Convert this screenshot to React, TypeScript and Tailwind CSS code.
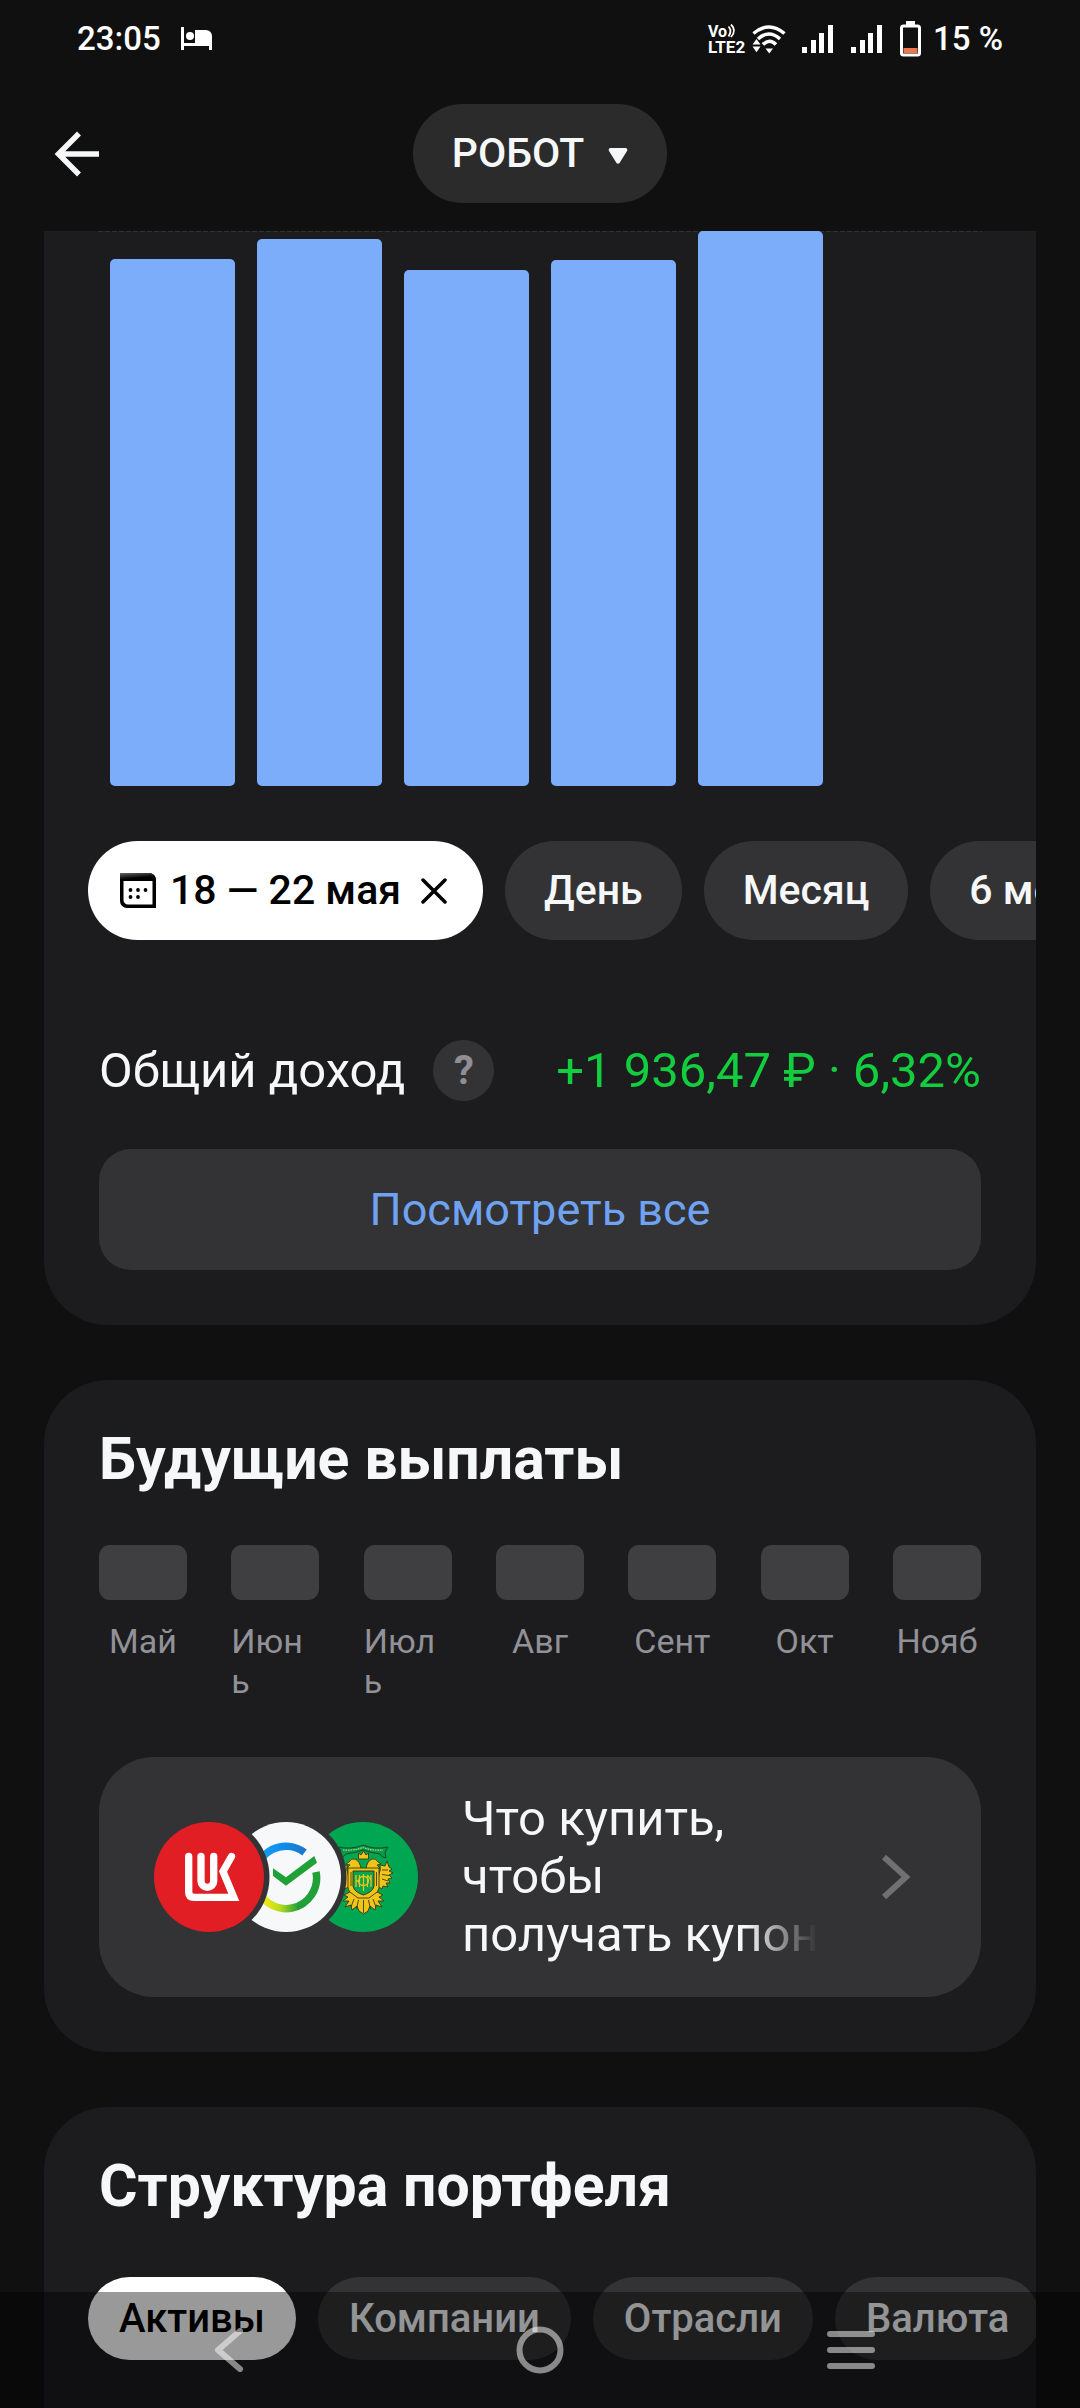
import { useState } from 'react';
import clsx from 'clsx';

const BARS = [527, 547, 516, 526, 555];
const CHART_HEIGHT = 555;

const PERIODS = ['День', 'Месяц', '6 месяцев'];
const MONTHS = ['Май', 'Июнь', 'Июль', 'Авг', 'Сент', 'Окт', 'Нояб'];
const SECTIONS = ['Активы', 'Компании', 'Отрасли', 'Валюта'];

function SignalIcon() {
  return (
    <svg width="31" height="28" viewBox="0 0 31 28" fill="#fff">
      <rect x="0" y="22" width="5" height="6" />
      <rect x="9" y="15" width="5" height="13" />
      <rect x="17" y="8" width="5" height="20" />
      <rect x="26" y="0" width="5" height="28" />
    </svg>
  );
}

function StatusBar() {
  return (
    <div className="flex h-[78px] shrink-0 items-center justify-between px-[77px] text-[33px] font-medium text-white">
      <div className="flex items-center gap-5">
        <span>23:05</span>
        <svg width="32" height="24" viewBox="0 0 32 24" fill="#fff">
          <rect x="0" y="0" width="3" height="23" />
          <rect x="0" y="16" width="31" height="3" />
          <rect x="28" y="10" width="3" height="13" />
          <circle cx="9" cy="9" r="4" />
          <path d="M14 3h11a6 6 0 0 1 6 6v8H14z" />
        </svg>
      </div>
      <div className="flex items-center">
        <svg width="40" height="32" viewBox="0 0 40 32" fill="#fff" className="mr-1 overflow-visible">
          <text x="0" y="14" fontSize="16" fontWeight="700" fontFamily="Roboto, sans-serif">Vo</text>
          <text x="0" y="30" fontSize="17" fontWeight="700" fontFamily="Roboto, sans-serif">LTE2</text>
          <path d="M20.500 3.500q4 4.500 0 10M23 1.500q6 6 0 12.500" fill="none" stroke="#fff" strokeWidth="1.800" />
        </svg>
        <svg width="34" height="30" viewBox="0 0 34 30" fill="none" stroke="#fff" strokeWidth="3.500">
          <path d="M1.500 9.500Q17 -3.500 32.500 9.500" />
          <path d="M6 15Q17 5 28 15" />
          <path d="M11 20.500Q17.500 14 24 20.500" />
          <path d="M13.500 24.500h7.500l-3.750 5z M0.500 22.500h8l-4 5.800z M0.500 20.500h8l-4 -5.500z" fill="#fff" stroke="none" />
        </svg>
        <div className="ml-4 mr-[18px] flex gap-[18px]">
          <SignalIcon />
          <SignalIcon />
        </div>
        <svg width="21" height="36" viewBox="0 0 21 36" className="mr-3">
          <rect x="6" y="0" width="9" height="5" fill="#fff" />
          <rect x="1.500" y="5" width="18" height="29" rx="2" fill="none" stroke="#fff" strokeWidth="3" />
          <rect x="3.500" y="27" width="14" height="5" fill="#ec7650" />
        </svg>
        <span>15 %</span>
      </div>
    </div>
  );
}

function Header() {
  return (
    <header className="grid h-[153px] shrink-0 grid-cols-[1fr_auto_1fr] items-center px-[54px] pb-0.5">
      <button aria-label="Назад" className="justify-self-start">
        <svg width="46" height="46" viewBox="0 0 46 46" fill="none" stroke="#f6f7f8" strokeWidth="5.500">
          <path d="M25 2.500 4.500 23 25 43.500M5 23h40" />
        </svg>
      </button>
      <button className="flex h-[99px] items-center gap-6 rounded-full bg-[#2b2b2b] px-[39px] text-[41px] font-medium text-[#f6f7f8]">
        РОБОТ
        <svg width="20" height="16" viewBox="0 0 20 16" fill="#f6f7f8" className="mt-1">
          <path d="M2 0h16q2 1 1 3l-7.500 12q-1.500 1.500-3 0L1 3Q0 1 2 0z" />
        </svg>
      </button>
    </header>
  );
}

function IncomeChart() {
  return (
    <div className="relative">
      <div className="absolute inset-x-[54px] top-0 h-px bg-[repeating-linear-gradient(90deg,#303032_0_5px,transparent_5px_7px)]" />
      <div className="relative grid h-[555px] grid-cols-6 items-end gap-[22px] px-[66px]">
        {BARS.map((value, i) => (
          <div
            key={i}
            className="rounded-[5px] bg-[#7cadfa]"
            style={{ height: `${(value / CHART_HEIGHT) * 100}%` }}
          />
        ))}
      </div>
    </div>
  );
}

function PeriodFilter() {
  return (
    <div className="mt-[55px] flex gap-[22px] overflow-hidden pl-11 text-[41px] font-medium">
      <button className="flex h-[99px] shrink-0 items-center rounded-full bg-white pl-8 pr-9 text-black">
        <svg width="36" height="36" viewBox="0 0 36 36" className="mr-[14px]">
          <defs>
            <linearGradient id="calTop" x1="0" y1="0" x2="0.400" y2="1">
              <stop offset="0" stopColor="#666" />
              <stop offset="0.700" stopColor="#000" />
            </linearGradient>
          </defs>
          <path d="M0 0v28a7 7 0 0 0 7 7h29V7a7 7 0 0 0-7-7zM3.500 8h29v23.500H8a4.500 4.500 0 0 1-4.500-4.500z" fillRule="evenodd" />
          <path d="M0 0h29a7 7 0 0 1 7 7v1H0z" fill="url(#calTop)" />
          <circle cx="10.500" cy="17" r="1.900" />
          <circle cx="18" cy="17" r="1.900" />
          <circle cx="25.500" cy="17" r="1.900" />
          <circle cx="10.500" cy="24" r="1.900" />
          <circle cx="18" cy="24" r="1.900" />
        </svg>
        18 — 22 мая
        <svg width="26" height="26" viewBox="0 0 26 26" fill="none" stroke="#000" strokeWidth="3.500" strokeLinecap="round" className="ml-5">
          <path d="M2 2l22 22M24 2L2 24" />
        </svg>
      </button>
      {PERIODS.map((period) => (
        <button key={period} className="h-[99px] shrink-0 rounded-full bg-[#333335] px-[39px] text-[#f6f7f8]">
          {period}
        </button>
      ))}
    </div>
  );
}

function IssuerLogos() {
  return (
    <svg width="264" height="110" viewBox="0 0 264 110" className="shrink-0">
      <defs>
        <mask id="cutSecond">
          <rect width="264" height="110" fill="#fff" />
          <circle cx="55" cy="55" r="60.500" fill="#000" />
        </mask>
        <mask id="cutThird">
          <rect width="264" height="110" fill="#fff" />
          <circle cx="132" cy="55" r="60.500" fill="#000" />
        </mask>
        <linearGradient id="blueArc" x1="0" y1="0" x2="1" y2="0">
          <stop offset="0" stopColor="#21a0e8" />
          <stop offset="0.500" stopColor="#0c8ff2" />
          <stop offset="1" stopColor="#1b78c8" />
        </linearGradient>
        <linearGradient id="greenArc" x1="0" y1="0" x2="1" y2="0">
          <stop offset="0.150" stopColor="#f2e812" />
          <stop offset="0.400" stopColor="#b4dc20" />
          <stop offset="0.700" stopColor="#21a038" />
        </linearGradient>
      </defs>
      <circle cx="55" cy="55" r="55" fill="#e21e25" />
      <g fill="none" stroke="#fff" strokeWidth="7.300" strokeLinecap="round">
        <path d="M34.700 34.500V70q0 5.300 5.300 5.300H79.800L69 49.500 77.500 34.500" strokeMiterlimit="6" />
        <path d="M47 34.500V59a6.350 6.350 0 0 0 12.700 0V34.500" />
      </g>
      <g mask="url(#cutSecond)">
        <circle cx="132" cy="55" r="55" fill="#f7f8fa" />
        <path d="M101.500 55A30.500 30.500 0 0 1 150.500 30.500" fill="none" stroke="url(#blueArc)" strokeWidth="7.500" />
        <path d="M162 50A30.500 30.500 0 0 1 102 62" fill="none" stroke="url(#greenArc)" strokeWidth="7.500" />
        <path d="M119 46.300 132 55.300 160.300 34 163 40.700 132 63.700 119 54z" fill="#21a038" />
      </g>
      <g mask="url(#cutThird)">
        <circle cx="209" cy="55" r="55" fill="#00a651" />
        <path d="M185 25q12 3 24-2 12 5 25 2l-3 5 1 6q-4 0-6-4-8-1-17-4-9 3-17 4-3 4-7 4l2-6z" fill="#079a4c" stroke="#124a26" strokeWidth="1" />
        <path d="M189 28q10 1 20-2.500 10 3.500 20 2.500" fill="none" stroke="#bcd87a" strokeWidth="1.200" strokeDasharray="1.500 1" />
        <g fill="#f0c419" stroke="#3c3a10" strokeWidth="0.900" strokeLinejoin="round">
          <path d="M204.500 37v-6l2.500 2 2.500-4 2.500 4 2.500-2v6z" />
          <path d="M207 47q-1-8-6-10-4-1-6 3l-3 2 4 1-3 3 4 1 1 3zM212 47q1-8 6-10 4-1 6 3l3 2-4 1 3 3-4 1-1 3z" />
          <path d="M225 52q2-4 1-9l5 1 2-5 2 6 3 2-3 2 4 2-4 2 3 3-4 1 2 4-4 0 2 4-5-1-1 3-5-3z" />
          <path d="M194 52q-2-4-1-9l-5 1-2-5-2 6-3 2 3 2-4 2 4 2-3 3 4 1-2 4 4 0-2 4 5-1 1 3 5-3z" />
          <path d="M194 46h31v20q-2 9-15.500 12Q196 75 194 66z" />
          <path d="M196 70l-6 3 4 2-5 4 6 0-4 6 6-2 1 5 5-4 2 5 4.500 3 4.500-3 2-5 5 4 1-5 6 2-4-6 6 0-5-4 4-2-6-3-8 6h-11z" />
        </g>
        <path d="M199 49h21v15q-1 6-10.500 9Q200 70 199 64z" fill="#00a651" stroke="#3c3a10" strokeWidth="1" />
        <g fill="none" stroke="#f0c419" strokeWidth="1.300">
          <path d="M202 53v12M205.500 53v12M202 59h3.500M209.500 52v17M213.500 53v12M217 53v12M213.500 53l3.500 5" />
          <ellipse cx="209.500" cy="59" rx="5" ry="4.500" />
        </g>
        <path d="M200 77l-3 8M204.500 78l-2 9M209.500 78v13M214.500 78l2 9M219 77l3 8M228 48l6 0M228 52.500l7 1M228 57l6 2M197 50v14M222.500 50v14" stroke="#3c3a10" strokeWidth="0.900" />
      </g>
    </svg>
  );
}

function NavBar() {
  return (
    <nav className="fixed inset-x-0 bottom-0 grid h-[116px] grid-cols-3 items-center justify-items-center bg-black/40 px-[74px]">
      <button aria-label="Назад">
        <svg width="30" height="44" viewBox="0 0 30 44" fill="none" stroke="#fff" strokeOpacity="0.500" strokeWidth="6" strokeLinecap="round" strokeLinejoin="round">
          <path d="M26 3 4 22l22 19" />
        </svg>
      </button>
      <button aria-label="Домой">
        <svg width="48" height="48" viewBox="0 0 48 48" fill="none" stroke="#fff" strokeOpacity="0.500" strokeWidth="6">
          <circle cx="24" cy="24" r="20.500" />
        </svg>
      </button>
      <button aria-label="Недавние">
        <svg width="48" height="38" viewBox="0 0 48 38" fill="#fff" fillOpacity="0.500">
          <rect x="0" y="0" width="48" height="6" rx="3" />
          <rect x="0" y="16" width="48" height="6" rx="3" />
          <rect x="0" y="32" width="48" height="6" rx="3" />
        </svg>
      </button>
    </nav>
  );
}

export default function App() {
  const [section, setSection] = useState('Активы');

  return (
    <div className="flex h-screen flex-col overflow-hidden bg-[#101010] font-['Roboto',sans-serif] text-[#f6f7f8]">
      <StatusBar />
      <Header />

      <main className="flex min-h-0 flex-1 flex-col gap-[55px] overflow-hidden px-11">
        {/* Income */}
        <section className="shrink-0 rounded-b-[64px] bg-[#1c1c1e] pb-[55px]">
          <IncomeChart />
          <PeriodFilter />
          <div className="mt-[100px] flex items-center px-[55px] text-[49px] leading-[60px]">
            <h2>Общий доход</h2>
            <button aria-label="Подробнее" className="ml-7 size-[61px] rounded-full bg-[#333335] text-[40px] font-bold text-[#8e8e93]">
              ?
            </button>
            <span className="ml-auto text-[#12ce3e]">+1 936,47 ₽ · 6,32%</span>
          </div>
          <div className="mt-12 px-[55px]">
            <button className="h-[121px] w-full rounded-[32px] bg-[#333335] text-[45px] text-[#6fa3f2]">
              Посмотреть все
            </button>
          </div>
        </section>

        {/* Upcoming payouts */}
        <section className="shrink-0 rounded-[64px] bg-[#1c1c1e] px-[55px] pb-[55px] pt-11">
          <h2 className="text-[59px] font-bold leading-[70px]">Будущие выплаты</h2>
          <ul className="mt-[51px] flex justify-between">
            {MONTHS.map((month) => (
              <li key={month} className="flex w-[88px] flex-col items-center">
                <div className="h-[55px] w-full rounded-[11px] bg-[#3f3f41]" />
                <span className="mt-[21px] break-all text-[34px] leading-[40px] text-[#919197]">{month}</span>
              </li>
            ))}
          </ul>
          <a href="#coupons" className="mt-14 flex h-[240px] items-center rounded-[55px] bg-[#333335] pl-[55px] pr-[70px]">
            <IssuerLogos />
            <div className="ml-11 mr-16 min-w-0 flex-1 text-[49px] leading-[58px]">
              <p>Что купить, чтобы</p>
              <p className="overflow-hidden whitespace-nowrap mask-r-from-80% mask-r-to-100%">получать купоны</p>
            </div>
            <svg width="30" height="46" viewBox="0 0 30 46" fill="none" stroke="#707072" strokeWidth="6">
              <path d="M3 3l22 20L3 43" />
            </svg>
          </a>
        </section>

        {/* Portfolio structure */}
        <section className="flex-1 rounded-t-[64px] bg-[#1c1c1e] pt-11">
          <h2 className="px-[55px] text-[59px] font-bold leading-[70px]">Структура портфеля</h2>
          <div className="mt-14 flex gap-[22px] overflow-hidden pl-11 text-[40px] font-medium">
            {SECTIONS.map((name) => (
              <button
                key={name}
                onClick={() => setSection(name)}
                className={clsx(
                  'h-[83px] shrink-0 rounded-full px-[31px]',
                  name === section ? 'bg-white text-black' : 'bg-[#333335] text-[#f6f7f8]'
                )}
              >
                {name}
              </button>
            ))}
          </div>
        </section>
      </main>

      <NavBar />
    </div>
  );
}
